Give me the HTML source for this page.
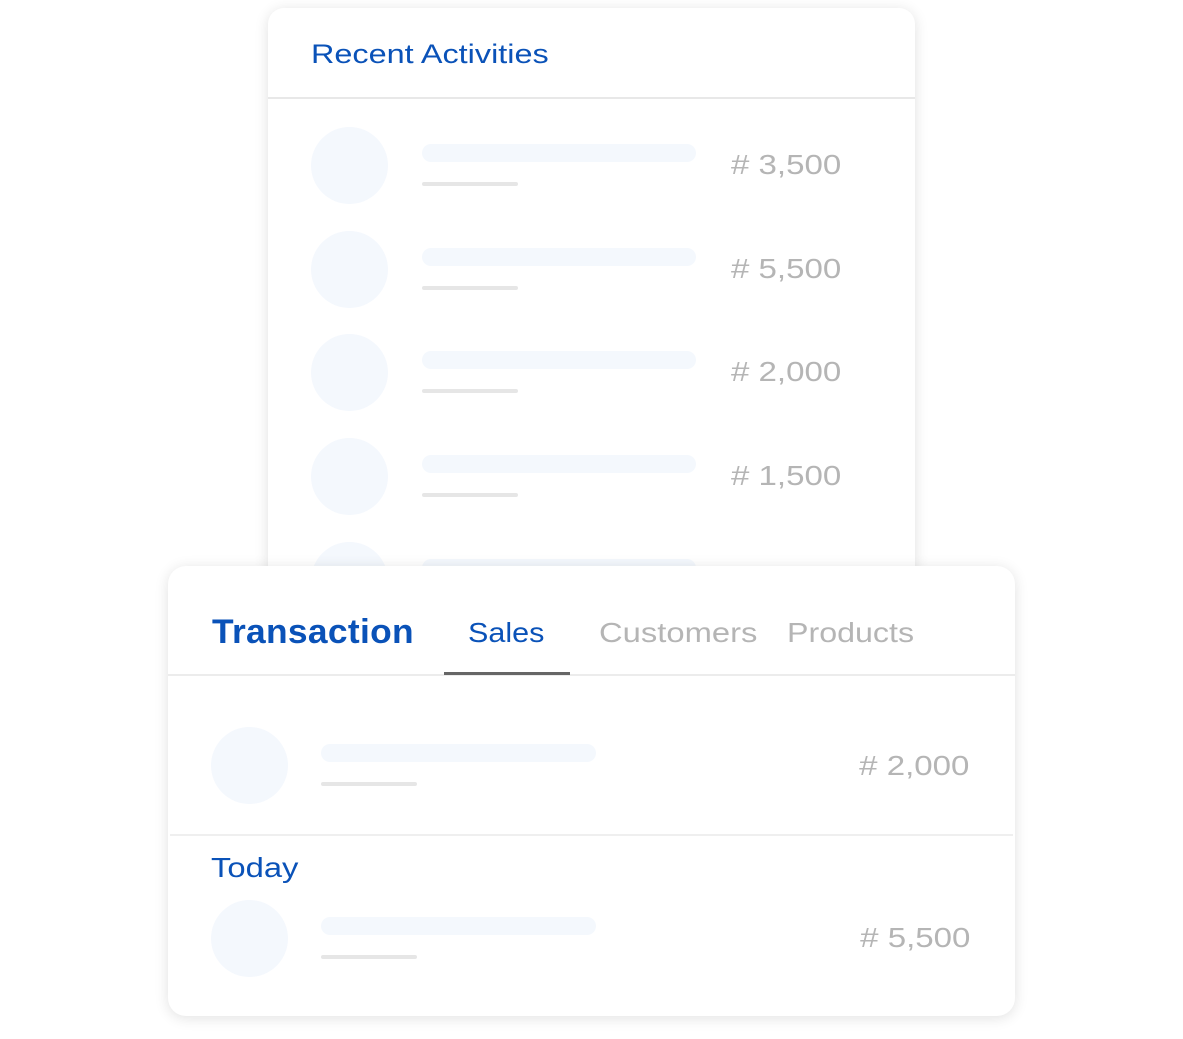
<!DOCTYPE html>
<html><head><style>
*{margin:0;padding:0;box-sizing:border-box}
body{width:1183px;height:1039px;background:#fff;position:relative;overflow:hidden;font-family:"Liberation Sans",sans-serif}
.a{position:absolute;white-space:nowrap}
.card{position:absolute;background:#fff;box-shadow:0 2px 14px rgba(0,0,0,0.12)}
.c{position:absolute;width:77px;height:77px;border-radius:50%;background:#f4f8fd}
.b{position:absolute;width:274px;height:18px;border-radius:9px;background:#f4f8fd}
.s{position:absolute;width:96px;height:4px;border-radius:2px;background:#e6e6e6}
.amt{position:absolute;font-size:28px;color:#b5b5b5;line-height:1;white-space:nowrap;transform:scaleX(1.18);transform-origin:left center}
.amr{transform-origin:right center}
.blue{color:#0a52b8}
</style></head><body>
<div class="card" style="left:268px;top:8px;width:647px;height:600px;border-radius:16px;overflow:hidden">
  <div class="a blue" style="left:43px;top:30px;font-size:27px;line-height:32px;transform:scaleX(1.2);transform-origin:left center">Recent Activities</div>
  <div class="a" style="left:0;top:89px;width:647px;height:2px;background:#e8e8e8"></div>
  <div class="c" style="left:43px;top:119px"></div><div class="b" style="left:154px;top:136px"></div><div class="s" style="left:154px;top:174px"></div><div class="amt" style="left:463px;top:143px"># 3,500</div>
  <div class="c" style="left:43px;top:223px"></div><div class="b" style="left:154px;top:240px"></div><div class="s" style="left:154px;top:278px"></div><div class="amt" style="left:463px;top:247px"># 5,500</div>
  <div class="c" style="left:43px;top:326px"></div><div class="b" style="left:154px;top:343px"></div><div class="s" style="left:154px;top:381px"></div><div class="amt" style="left:463px;top:350px"># 2,000</div>
  <div class="c" style="left:43px;top:430px"></div><div class="b" style="left:154px;top:447px"></div><div class="s" style="left:154px;top:485px"></div><div class="amt" style="left:463px;top:454px"># 1,500</div>
  <div class="c" style="left:43px;top:534px"></div><div class="b" style="left:154px;top:551px"></div>
</div>
<div class="card" style="left:168px;top:566px;width:847px;height:450px;border-radius:18px">
  <div class="a blue" style="left:44px;top:46px;font-size:34px;line-height:40px;font-weight:bold;letter-spacing:0.3px;transform:scaleX(1.04);transform-origin:left center">Transaction</div>
  <div class="a blue" style="left:300px;top:50px;font-size:28px;line-height:34px;transform:scaleX(1.09);transform-origin:left center">Sales</div>
  <div class="a" style="left:431px;top:50px;font-size:28px;line-height:34px;color:#b5b5b5;transform:scaleX(1.17);transform-origin:left center">Customers</div>
  <div class="a" style="left:619px;top:50px;font-size:28px;line-height:34px;color:#b5b5b5;transform:scaleX(1.15);transform-origin:left center">Products</div>
  <div class="a" style="left:0;top:108px;width:847px;height:2px;background:#ececec"></div>
  <div class="a" style="left:276px;top:106px;width:126px;height:3px;background:#666"></div>
  <div class="c" style="left:43px;top:161px"></div><div class="b" style="left:153px;top:178px;width:275px"></div><div class="s" style="left:153px;top:216px"></div><div class="amt amr" style="right:46px;top:186px"># 2,000</div>
  <div class="a" style="left:2px;top:268px;width:843px;height:2px;background:#efefef"></div>
  <div class="a blue" style="left:43px;top:285px;font-size:28px;line-height:34px;transform:scaleX(1.17);transform-origin:left center">Today</div>
  <div class="c" style="left:43px;top:334px"></div><div class="b" style="left:153px;top:351px;width:275px"></div><div class="s" style="left:153px;top:389px"></div><div class="amt amr" style="right:45px;top:358px"># 5,500</div>
</div>
</body></html>
